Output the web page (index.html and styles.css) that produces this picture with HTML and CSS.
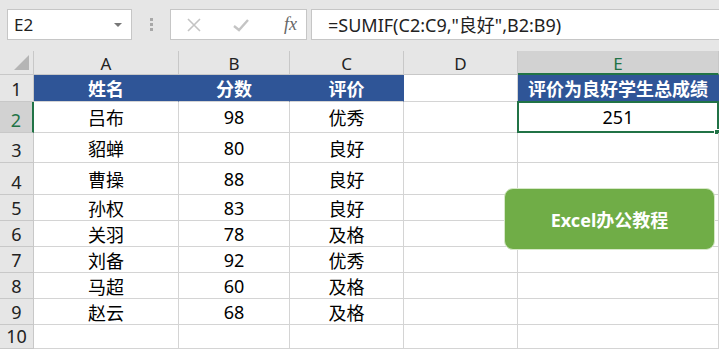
FILE: index.html
```html
<!DOCTYPE html>
<html lang="zh-CN">
<head>
    <meta charset="UTF-8">
    <title>SUMIF</title>
    <link rel="stylesheet" href="styles.css">
</head>
<body>
    <div class="app">
        <div class="formula-bar">
            <div class="name-box">
                <span>E2</span>
                <span class="caret"></span>
            </div>
            <div class="grip"><i></i><i></i><i></i></div>
            <div class="func-box">
                <svg class="ico" width="16" height="16" viewBox="0 0 16 16"><path d="M2 2 L14 14 M14 2 L2 14" stroke="#c4c4c4" stroke-width="1.6" fill="none"/></svg>
                <svg class="ico" width="18" height="16" viewBox="0 0 18 16"><path d="M2 9 L7 13 L16 3" stroke="#c4c4c4" stroke-width="2.4" fill="none"/></svg>
                <span class="fx">fx</span>
            </div>
            <div class="formula-input">=SUMIF(C2:C9,"良好",B2:B9)</div>
        </div>

        <div class="sheet">
            <div class="grid">
                <div class="hd corner"><span class="tri"></span></div>
                <div class="hd col">A</div>
                <div class="hd col">B</div>
                <div class="hd col">C</div>
                <div class="hd col">D</div>
                <div class="hd col active">E</div>

                <div class="hd row">1</div>
                <div class="cell title">姓名</div>
                <div class="cell title">分数</div>
                <div class="cell title">评价</div>
                <div class="cell"></div>
                <div class="cell title">评价为良好学生总成绩</div>

                <div class="hd row active">2</div>
                <div class="cell">吕布</div>
                <div class="cell">98</div>
                <div class="cell">优秀</div>
                <div class="cell"></div>
                <div class="cell selected">251<span class="handle"></span></div>

                <div class="hd row">3</div>
                <div class="cell">貂蝉</div>
                <div class="cell">80</div>
                <div class="cell">良好</div>
                <div class="cell"></div>
                <div class="cell"></div>

                <div class="hd row">4</div>
                <div class="cell">曹操</div>
                <div class="cell">88</div>
                <div class="cell">良好</div>
                <div class="cell"></div>
                <div class="cell"></div>

                <div class="hd row">5</div>
                <div class="cell">孙权</div>
                <div class="cell">83</div>
                <div class="cell">良好</div>
                <div class="cell"></div>
                <div class="cell"></div>

                <div class="hd row">6</div>
                <div class="cell">关羽</div>
                <div class="cell">78</div>
                <div class="cell">及格</div>
                <div class="cell"></div>
                <div class="cell"></div>

                <div class="hd row">7</div>
                <div class="cell">刘备</div>
                <div class="cell">92</div>
                <div class="cell">优秀</div>
                <div class="cell"></div>
                <div class="cell"></div>

                <div class="hd row">8</div>
                <div class="cell">马超</div>
                <div class="cell">60</div>
                <div class="cell">及格</div>
                <div class="cell"></div>
                <div class="cell"></div>

                <div class="hd row">9</div>
                <div class="cell">赵云</div>
                <div class="cell">68</div>
                <div class="cell">及格</div>
                <div class="cell"></div>
                <div class="cell"></div>

                <div class="hd row">10</div>
                <div class="cell"></div>
                <div class="cell"></div>
                <div class="cell"></div>
                <div class="cell"></div>
                <div class="cell"></div>
            </div>

            <div class="badge">Excel办公教程</div>
        </div>
    </div>
</body>
</html>
```

FILE: styles.css
```css
:root {
    --bar: #e6e6e6;
    --line: #d4d4d4;
    --hd-line: #c8c8c8;
    --blue: #2f5597;
    --green: #217346;
    --btn: #70ad47;
}

* {
    box-sizing: border-box;
    margin: 0;
    padding: 0;
}

body {
    width: 719px;
    height: 349px;
    overflow: hidden;
    background: var(--bar);
    font-family: "Noto Sans", "Noto Sans CJK SC", sans-serif;
    color: #000;
}

/* formula bar */
.formula-bar {
    height: 51px;
    display: flex;
    align-items: flex-start;
    padding: 9px 0 0 7px;
}

.name-box {
    width: 125px;
    height: 31px;
    background: #fff;
    border: 1px solid #c6c6c6;
    display: flex;
    align-items: center;
    justify-content: space-between;
    padding: 0 9px 0 6px;
    font-size: 17px;
    color: #222;
}

.caret {
    width: 0;
    height: 0;
    border-left: 4px solid transparent;
    border-right: 4px solid transparent;
    border-top: 4px solid #777;
}

.grip {
    width: 38px;
    height: 31px;
    display: flex;
    flex-direction: column;
    align-items: center;
    justify-content: center;
    gap: 2px;
}

.grip i {
    width: 3px;
    height: 3px;
    background: #a8a8a8;
}

.func-box {
    width: 137px;
    height: 31px;
    background: #fff;
    border: 1px solid #c6c6c6;
    display: flex;
    align-items: center;
    padding: 0 0 0 15px;
    gap: 30px;
}

.fx {
    font-family: "Liberation Serif", serif;
    font-style: italic;
    font-size: 18px;
    color: #666;
    margin-left: 4px;
}

.formula-input {
    flex: 1;
    height: 31px;
    margin-left: 4px;
    background: #fff;
    border: 1px solid #c6c6c6;
    border-right: none;
    padding: 1px 0 0 16px;
    font-size: 18px;
    color: #222;
    white-space: nowrap;
}

/* sheet */
.sheet {
    position: relative;
}

.grid {
    display: grid;
    grid-template-columns: 34px 145px 111px 114px 114px 201px;
    grid-template-rows: 24px 27px 31px 30px 32px 26px 26px 26px 26px 26px 24px;
    background: #fff;
}

.hd {
    background: var(--bar);
    border-right: 1px solid var(--hd-line);
    border-bottom: 1px solid var(--hd-line);
    display: flex;
    align-items: center;
    justify-content: center;
    font-size: 17px;
    color: #222;
}

.corner {
    justify-content: flex-end;
    align-items: flex-end;
    padding: 0 4px 4px 0;
}

.tri {
    width: 0;
    height: 0;
    border-left: 15px solid transparent;
    border-bottom: 15px solid #b5b5b5;
}

.hd.col {
    padding-top: 2px;
}

.hd.row {
    align-items: flex-end;
    padding-bottom: 0;
    font-size: 18px;
}

.hd.active {
    background: #d2d2d2;
    color: var(--green);
}

.hd.col.active {
    border-bottom: 2px solid var(--green);
}

.hd.row.active {
    border-right: 2px solid var(--green);
}

.cell {
    position: relative;
    border-right: 1px solid var(--line);
    border-bottom: 1px solid var(--line);
    display: flex;
    align-items: center;
    justify-content: center;
    font-size: 18px;
    white-space: nowrap;
}

.cell.title {
    background: var(--blue);
    border-color: var(--blue);
    color: #fff;
    font-weight: 700;
    border-bottom-color: var(--line);
}

.cell.selected {
    border: 2px solid var(--green);
    margin: -1px 0 0 -1px;
}

.handle {
    position: absolute;
    right: -3px;
    bottom: -4px;
    width: 6px;
    height: 6px;
    background: var(--green);
    border: 1px solid #fff;
}

.badge {
    position: absolute;
    left: 504px;
    top: 137px;
    width: 211px;
    height: 62px;
    border-radius: 9px;
    background: var(--btn);
    border: 1px solid #d6e8c8;
    color: #fff;
    font-weight: 700;
    font-size: 18px;
    display: flex;
    align-items: center;
    justify-content: center;
}
```
